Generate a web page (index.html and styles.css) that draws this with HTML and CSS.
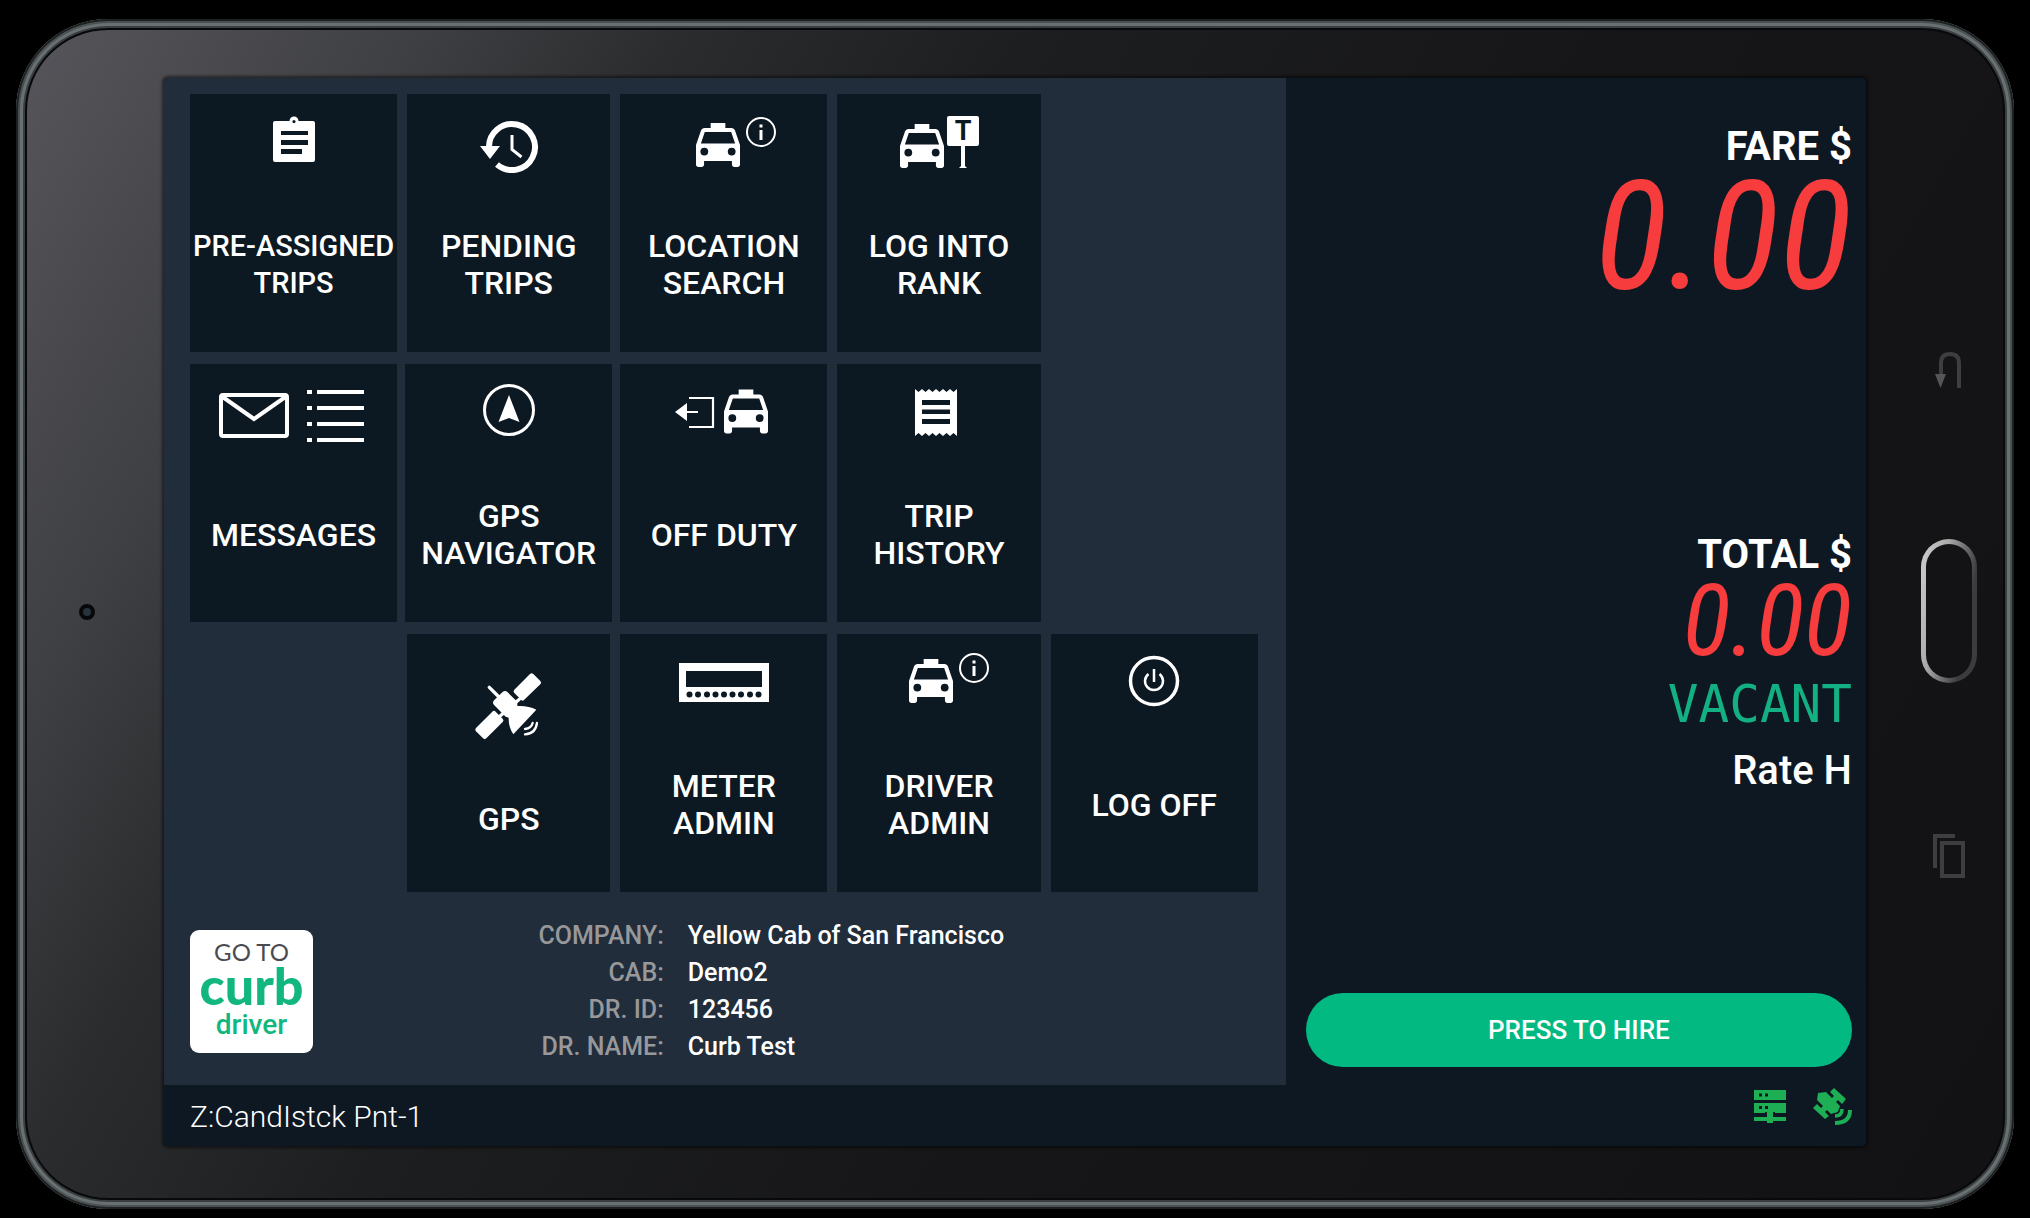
FILE: index.html
```
<!DOCTYPE html>
<html lang="en">
<head>
  <meta charset="UTF-8" />
  <meta name="viewport" content="width=device-width, initial-scale=1.0" />
  <title>Driver Home</title>
  <link rel="stylesheet" href="styles.css">
</head>
<body>
  <svg class="sprite" aria-hidden="true">
    <symbol id="taxi" viewBox="3 3 18 18">
      <path d="M18.92 6.01C18.72 5.42 18.16 5 17.5 5H15V3H9v2H6.5c-.66 0-1.21.42-1.42 1.01L3 12v8c0 .55.45 1 1 1h1.3c.55 0 1-.45 1-1v-1.500h11.4V20c0 .55.45 1 1 1H20c.55 0 1-.45 1-1v-8l-2.08-5.99zM6.4 16.3a1.6 1.6 0 1 1 0-3.2 1.6 1.6 0 0 1 0 3.2zm11.2 0a1.6 1.6 0 1 1 0-3.2 1.6 1.6 0 0 1 0 3.2zM5 11.4l1.6-4.7h10.8L19 11.4H5z"/>
    </symbol>
    <symbol id="taxi-info" viewBox="0 0 160 114">
      <use href="#taxi" x="50" y="25" width="44" height="44"/>
      <circle cx="115" cy="34" r="14" fill="none" stroke="#fff" stroke-width="2"/>
      <path d="M113.500 26.500h3v3h-3zM113.500 32h3v10h-3z"/>
    </symbol>
  </svg>

  <div class="device">
    <div class="bezel bezel-left">
      <span class="camera"></span>
    </div>

    <main class="screen">
      <section class="home">
        <div class="tiles">
          <button class="tile">
            <svg class="tile-icon" viewBox="0 0 160 114">
              <path fill-rule="evenodd" d="M61 27h14.500a4.500 4.500 0 0 1 9 0H99a2 2 0 0 1 2 2v37a2 2 0 0 1-2 2H61a2 2 0 0 1-2-2V29a2 2 0 0 1 2-2zM67 37v4h27v-4zM67 46v5h27v-5zM67 55v5h21v-5zM80 26a1.600 1.600 0 1 0 0 3.200 1.600 1.600 0 0 0 0-3.200z"/>
            </svg>
            <span class="tile-label tile-label-long">PRE-ASSIGNED<br>TRIPS</span>
          </button>
          <button class="tile tile-narrow">
            <svg class="tile-icon" viewBox="0 0 160 114">
              <path fill="none" stroke="#fff" stroke-width="6" d="M60 54A23 23 0 1 1 68 70.500"/>
              <path d="M51 52h20L61 65z"/>
              <path fill="none" stroke="#fff" stroke-width="3" d="M83 41v14.500l9.500 7.500"/>
            </svg>
            <span class="tile-label">PENDING<br>TRIPS</span>
          </button>
          <button class="tile">
            <svg class="tile-icon" viewBox="0 0 160 114">
              <use href="#taxi-info" x="2" y="4" width="160" height="114"/>
            </svg>
            <span class="tile-label">LOCATION<br>SEARCH</span>
          </button>
          <button class="tile tile-narrow">
            <svg class="tile-icon" viewBox="0 0 160 114">
              <use href="#taxi" x="41" y="30" width="44" height="44"/>
              <path d="M90 22h28a2 2 0 0 1 2 2v26a2 2 0 0 1-2 2h-12v20l2 2h-8l2-2V52H90a2 2 0 0 1-2-2V24a2 2 0 0 1 2-2z"/>
              <text class="sign-letter" x="104" y="46" text-anchor="middle">T</text>
            </svg>
            <span class="tile-label">LOG INTO<br>RANK</span>
          </button>

          <button class="tile tile-first">
            <svg class="tile-icon" viewBox="0 0 160 114">
              <g fill="none" stroke="#fff" stroke-width="4">
                <rect x="7" y="31" width="66" height="41" rx="2"/>
                <path d="M8 32.500l32 22.500L72 32.500"/>
              </g>
              <path d="M93 26h5v4h-5zM103 26h47v4h-47zM93 42h5v4h-5zM103 42h47v4h-47zM93 58h5v4h-5zM103 58h47v4h-47zM93 74h5v4h-5zM103 74h47v4h-47z"/>
            </svg>
            <span class="tile-label">MESSAGES</span>
          </button>
          <button class="tile">
            <svg class="tile-icon" viewBox="0 0 160 114">
              <circle cx="80" cy="46" r="24.500" fill="none" stroke="#fff" stroke-width="3"/>
              <path d="M80 31l10.500 27L80 54l-10.500 4z"/>
            </svg>
            <span class="tile-label">GPS<br>NAVIGATOR</span>
          </button>
          <button class="tile">
            <svg class="tile-icon" viewBox="0 0 160 114">
              <use href="#taxi" x="80" y="25" width="44" height="45"/>
              <path fill="none" stroke="#fff" stroke-width="2.200" d="M45 34h24v29H45M40 48h14"/>
              <path d="M31 48l12-9v18z"/>
            </svg>
            <span class="tile-label">OFF DUTY</span>
          </button>
          <button class="tile tile-narrow">
            <svg class="tile-icon" viewBox="0 0 160 114">
              <path fill-rule="evenodd" d="M56 25l3.500 3 3.500-3 3.500 3 3.500-3 3.500 3 3.500-3 3.500 3 3.500-3 3.500 3 3.500-3 3.500 3 3.500-3v47l-3.500-3-3.500 3-3.500-3-3.500 3-3.500-3-3.500 3-3.500-3-3.500 3-3.500-3-3.500 3-3.500-3-3.500 3zM63 36v5h28v-5zM63 45.500v4.500h28v-4.500zM63 55v5h28v-5z"/>
            </svg>
            <span class="tile-label">TRIP<br>HISTORY</span>
          </button>

          <button class="tile tile-narrow tile-gps">
            <svg class="tile-icon" viewBox="0 0 160 114">
              <g transform="translate(-29 -14) scale(.3333)">
                <path d="M343 209l47-47q5-5 10 0l21 21q5 5 0 10l-49 47q-4 4-8 0l-21-21q-5-5 0-10z"/>
                <path d="M287 275l21 21q5 5 0 10l-49 49q-5 5-10 0l-21-21q-5-5 0-10l49-49q5-5 10 0z"/>
                <path d="M307 217q8-8 16 0l29 28v13q32-2 57 11l-69 74q-15-22-14-50l-9-3-34-34q-8-8 0-16z"/>
                <path fill="none" stroke="#fff" stroke-width="10" stroke-linecap="round" d="M268 202l32 32M344 250l14-12M296 292l14-12"/>
                <path fill="none" stroke="#fff" stroke-width="7" stroke-linecap="round" d="M375 327q19-2 23-18M375 343q32-2 36-34"/>
              </g>
            </svg>
            <span class="tile-label">GPS</span>
          </button>
          <button class="tile">
            <svg class="tile-icon" viewBox="0 0 160 114">
              <path fill-rule="evenodd" d="M35 29h90v39H35zM42 37v16h76V37z"/>
              <g class="meter-keys">
                <circle cx="45.500" cy="60.500" r="3"/><circle cx="54" cy="60.500" r="3"/><circle cx="63" cy="60.500" r="3"/>
                <circle cx="71.500" cy="60.500" r="3"/><circle cx="80" cy="60.500" r="3"/><circle cx="88.500" cy="60.500" r="3"/>
                <circle cx="97" cy="60.500" r="3"/><circle cx="106" cy="60.500" r="3"/><circle cx="114.500" cy="60.500" r="3"/>
              </g>
            </svg>
            <span class="tile-label">METER<br>ADMIN</span>
          </button>
          <button class="tile tile-narrow">
            <svg class="tile-icon" viewBox="0 0 160 114">
              <use href="#taxi-info" width="160" height="114"/>
            </svg>
            <span class="tile-label">DRIVER<br>ADMIN</span>
          </button>
          <button class="tile">
            <svg class="tile-icon" viewBox="0 0 160 114">
              <g fill="none" stroke="#fff">
                <circle cx="80" cy="47" r="23.500" stroke-width="3.500"/>
                <path stroke-width="2.500" d="M80 35v13M74.500 40a9 9 0 1 0 11 0"/>
              </g>
            </svg>
            <span class="tile-label">LOG OFF</span>
          </button>
        </div>

        <div class="home-footer">
          <a class="curb-link" href="#">
            <span class="curb-goto">GO TO</span>
            <span class="curb-name">curb</span>
            <span class="curb-driver">driver</span>
          </a>
          <dl class="details">
            <dt>COMPANY:</dt><dd>Yellow Cab of San Francisco</dd>
            <dt>CAB:</dt><dd>Demo2</dd>
            <dt>DR. ID:</dt><dd>123456</dd>
            <dt>DR. NAME:</dt><dd>Curb Test</dd>
          </dl>
        </div>
      </section>

      <section class="meter">
        <div class="meter-label">FARE $</div>
        <div class="fare-value">0.00</div>
        <div class="meter-label total-label">TOTAL $</div>
        <div class="total-value">0.00</div>
        <div class="meter-state">VACANT</div>
        <div class="meter-rate">Rate H</div>
        <button class="hire-btn">PRESS TO HIRE</button>
      </section>

      <div class="zone">Z:CandIstck Pnt-1</div>

      <div class="status">
        <svg class="status-icon" viewBox="0 0 40 40">
          <path fill-rule="evenodd" d="M4 3h32v10H4zM9 6.500v3h3v-3zM15 6.500v3h3v-3zM4 16h32v10H4zM9 19v3h3v-3zM15 19v3h3v-3z"/>
          <path class="status-gap" d="M15 25h10v4H15z"/>
          <path d="M17 25h6v5h13v4H23v2h-6v-2H4v-4h13z"/>
        </svg>
        <!-- satellite, body along the diagonal with a panel on each side -->
        <svg class="status-icon" viewBox="0 0 40 40">
          <path d="M6 6l8-1 14 14-1 3 2 2-5 5-2-3-3 1L5 13z"/>
          <path d="M18 5l4-4 12 11-4 5-4-4-4 4-4-4 4-4zM1 21l4-4 4 4 4-4 4 4-4 4 4 4-4 3z"/>
          <g fill="none" stroke="#1eae53">
            <path stroke="#0e1822" stroke-width="8" d="M22 30q9 0 9-9"/>
            <path stroke-width="3.500" d="M23 29q7 0 7-7"/>
            <path stroke-width="4" d="M23 36q15 0 15-13"/>
          </g>
        </svg>
      </div>
    </main>

    <div class="bezel bezel-right">
      <button class="key" aria-label="Back">
        <svg width="28" height="38" viewBox="0 0 28 38">
          <path fill="none" stroke="#3e3e40" stroke-width="4" d="M6 25V12q0-9 9-9t9 9v25"/>
          <path fill="#555557" d="M0 23h11L5.500 37z"/>
        </svg>
      </button>
      <button class="key key-home" aria-label="Home"></button>
      <button class="key" aria-label="Recent apps">
        <svg width="34" height="46" viewBox="0 0 34 46">
          <g fill="none" stroke="#3e3e40" stroke-width="4">
            <path d="M23 3H3v32"/>
            <rect x="10" y="10" width="21" height="33"/>
          </g>
        </svg>
      </button>
    </div>
  </div>
</body>
</html>
```
FILE: styles.css
```
* {
  box-sizing: border-box;
}
body {
  margin: 0;
  min-height: 100vh;
  display: flex;
  padding: 19px 16px 9px;
  background: #000;
  color: #fff;
  font-family: Roboto, "Liberation Sans", sans-serif;
}
button {
  margin: 0;
  padding: 0;
  border: none;
  font: inherit;
  color: inherit;
  cursor: pointer;
}
svg {
  fill: #fff;
}
.sprite {
  position: absolute;
  width: 0;
  height: 0;
}

/* tablet body */
.device {
  flex: 1;
  display: grid;
  grid-template-columns: 148px minmax(0, 1fr) 148px;
  padding: 59px 0 63px;
  border-radius: 92px;
  background: linear-gradient(120deg, #57565c 0%, #3f4043 15%, #2b2c2e 25%, #1d1e20 38%, #161618 60%, #121214 100%);
  box-shadow: inset 0 0 0 2px #1d2021, inset 0 0 0 4px #4b5153, inset 0 0 0 7px #687072, inset 0 0 0 9px #3a3e40, inset 0 0 0 11px #08090a;
}
.bezel {
  display: flex;
  flex-direction: column;
  align-items: center;
  justify-content: center;
}
.bezel-left {
  padding-right: 6px;
}
.camera {
  width: 16px;
  height: 16px;
  border-radius: 50%;
  border: 4px solid #070809;
  background: #26323c;
}
.bezel-right {
  gap: 150px;
  padding: 6px 0 0 18px;
}
.key {
  display: flex;
  background: none;
}
.key-home {
  width: 56px;
  height: 144px;
  border: 5px solid transparent;
  border-radius: 28px;
  background: linear-gradient(#131315, #131315) padding-box, linear-gradient(100deg, #d0d0d0 0%, #a8a8a8 35%, #3c3c3e 75%) border-box;
}

/* screen */
.screen {
  display: grid;
  grid-template-columns: 29fr 15fr;
  grid-template-rows: 1fr 61px;
  border-radius: 4px;
  overflow: hidden;
  background: #0e1822;
  box-shadow: 0 0 3px 2px rgba(0, 0, 0, 0.5);
}
.home {
  padding: 16px 28px 20px 26px;
  background: #212d3a;
}
.tiles {
  display: grid;
  grid-template-columns: repeat(5, minmax(0, 1fr));
  grid-auto-rows: 258px;
  gap: 12px 8px;
}
.tile {
  display: flex;
  flex-direction: column;
  align-items: center;
  padding-bottom: 30px;
  background: #0c1822;
  font-size: 32px;
  font-weight: 500;
  line-height: 37px;
}
.tile-narrow {
  margin: 0 2px;
}
.tile-first {
  grid-column-start: 1;
}
.tile-gps {
  grid-column-start: 2;
}
.tile-icon {
  flex: none;
  width: 160px;
  height: 114px;
}
.tile-label {
  flex: 1;
  display: grid;
  align-content: center;
  white-space: nowrap;
}
.tile-label-long {
  font-size: 29px;
}
.tile-gps .tile-label {
  padding-top: 28px;
}
.sign-letter {
  fill: #0c1822;
  font-size: 27px;
  font-weight: 700;
}
.meter-keys {
  fill: #0c1822;
}

.home-footer {
  display: flex;
  align-items: center;
  margin-top: 25px;
}
.curb-link {
  display: flex;
  flex-direction: column;
  align-items: center;
  width: 123px;
  height: 123px;
  padding-top: 8px;
  border-radius: 9px;
  background: #fff;
  text-decoration: none;
}
.curb-goto {
  font-family: Lato, sans-serif;
  font-size: 24px;
  line-height: 28px;
  color: #4a4b52;
}
.curb-name {
  font-family: Lato, sans-serif;
  font-size: 52px;
  font-weight: 900;
  line-height: 38px;
  color: #12b67f;
}
.curb-driver {
  font-size: 28px;
  font-weight: 500;
  line-height: 42px;
  color: #12b67f;
}
.details {
  flex: 1;
  display: grid;
  grid-template-columns: 8fr 13fr;
  column-gap: 24px;
  margin: 0;
  font-size: 25px;
  font-weight: 500;
  line-height: 37px;
}
.details dt {
  text-align: right;
  color: #98989b;
}
.details dd {
  margin: 0;
}

.meter {
  display: flex;
  flex-direction: column;
  align-items: flex-end;
  padding: 45px 14px 18px 20px;
}
.meter-label, .meter-rate {
  font-size: 40px;
  font-weight: 700;
  line-height: 48px;
}
.meter-rate {
  font-weight: 500;
}
.fare-value, .total-value {
  font-family: "Roboto Condensed", Roboto, sans-serif;
  font-style: italic;
  color: #f63c3d;
}
.fare-value {
  font-size: 152px;
  line-height: 130px;
}
.total-label {
  margin-top: 230px;
}
.total-value {
  font-size: 100px;
  line-height: 84px;
}
.meter-state {
  font-family: "DejaVu Sans Mono", monospace;
  font-size: 51px;
  line-height: 84px;
  color: #12b083;
}
.hire-btn {
  width: 100%;
  height: 74px;
  margin-top: auto;
  border-radius: 37px;
  background: #02b981;
  font-size: 26px;
  font-weight: 500;
}

.zone {
  padding: 0 26px;
  font-size: 30px;
  font-weight: 300;
  line-height: 64px;
}
.status {
  display: flex;
  justify-content: flex-end;
  gap: 22px;
  padding: 2px 14px 0;
}
.status-icon {
  width: 40px;
  height: 40px;
  fill: #1eae53;
}
.status-gap {
  fill: #0e1822;
}
```
